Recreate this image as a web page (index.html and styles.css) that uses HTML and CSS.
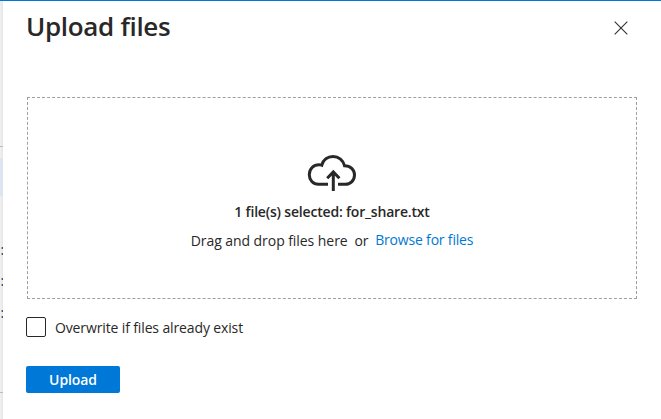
FILE: index.html
```html
<!DOCTYPE html>
<html lang="en">
<head>
<meta charset="utf-8">
<title>Upload files</title>
<link rel="stylesheet" href="styles.css">
</head>
<body>
<div class="shell">
  <div class="backdrop">
    <div class="row-line"></div>
    <div class="row-selected"></div>
    <div class="links"><i></i><i></i><i></i><i></i><i></i><i></i></div>
    <div class="row-line bottom"></div>
  </div>
  <main class="panel">
    <header class="header">
      <h1 class="title">Upload files</h1>
      <button class="close" aria-label="Close">
        <svg width="14" height="14" viewBox="0 0 14 14"><path d="M.7.7l12.6 12.6M13.3.7L.7 13.3" fill="none" stroke="#323130" stroke-width="1.1"/></svg>
      </button>
    </header>
    <section class="dropzone">
      <svg class="cloud" width="50" height="38" viewBox="0 0 50 38" fill="none" stroke="#292827" stroke-width="3">
        <path d="M21 31.3H11.5C6 31.3 2.3 27.200 2.300 21.800C2.300 16 6.500 11.700 12 11.700C13 11.700 14 11.900 14.800 12.200C16.200 6.600 20.700 3.500 26 3.500C31.800 3.500 36.300 7.300 37.500 12.700C43.500 12.700 47.500 16.600 47.500 22C47.500 27.300 43.700 31.300 38.300 31.300H31"/>
        <path d="M26.300 38V19M20.200 25.300L26.300 19L32.400 25.300"/>
      </svg>
      <p class="selected">1 file(s) selected: for_share.txt</p>
      <p class="hint"><span class="drag">Drag and drop files here</span><span class="or">or</span><a class="browse">Browse for files</a></p>
    </section>
    <label class="overwrite"><span class="box"></span><span class="label">Overwrite if files already exist</span></label>
    <button class="upload"><span>Upload</span></button>
  </main>
</div>
</body>
</html>
```
FILE: styles.css
```css
* { box-sizing: border-box; }
body {
  margin: 0;
  background: #fff;
  color: #292827;
  font: 14px/20px "Open Sans", "Noto Sans", sans-serif;
  overflow: hidden;
}
h1, p { margin: 0; }
button { border: 0; padding: 0; background: none; font: inherit; }
.shell { display: flex; height: 419px; border-top: 1px solid #0078d4; }
.backdrop {
  width: 3px;
  padding-top: 145px;
  background: linear-gradient(90deg, #f1f1f1, #e6e6e6);
}
.row-line { height: 1px; background: #bdbdbd; }
.row-selected { height: 38px; margin-top: 11px; background: #dbe6f1; }
.links { height: 196px; padding: 51px 0 0 1px; }
.links i { display: block; height: 2px; background: linear-gradient(90deg, #d7a477 50%, #1765ad 50%); margin-bottom: 4px; }
.links i:nth-child(even) { margin-bottom: 24px; }
.links i:nth-child(2) { margin-bottom: 23px; }
.panel { flex: 1; padding: 0 24px 0 23px; }
.header { display: flex; justify-content: space-between; height: 96px; }
.title { padding-top: 8px; font-size: 26px; line-height: 34px; font-weight: 600; letter-spacing: -0.32px; white-space: nowrap; }
.close { width: 14px; height: 14px; margin: 20px 9px 0 0; display: flex; }
.dropzone {
  display: flex;
  flex-direction: column;
  align-items: center;
  height: 202px;
  margin-left: 1px;
  padding-top: 55px;
  border: 1px dashed #a19f9d;
}
.cloud { display: block; }
.selected { margin-top: 11px; font-weight: 600; letter-spacing: -0.19px; white-space: nowrap; }
.hint { display: flex; margin-top: 8px; white-space: nowrap; }
.drag, .or { padding-top: 1px; }
.drag { letter-spacing: -0.06px; }
.or { margin: 0 7px 0 7px; letter-spacing: -0.3px; }
.browse { color: #0078d4; letter-spacing: -0.18px; }
.overwrite { display: flex; align-items: center; height: 20px; margin-top: 18px; }
.box { width: 20px; height: 20px; border: 1px solid #292827; border-radius: 2px; }
.label { margin-left: 9px; padding-top: 2px; letter-spacing: -0.13px; }
.upload {
  display: block;
  width: 94px;
  height: 27px;
  margin-top: 29px;
  border-radius: 2px;
  background: #0078d7;
  color: #fff;
  font-weight: 650;
  letter-spacing: -0.1px;
}
```
